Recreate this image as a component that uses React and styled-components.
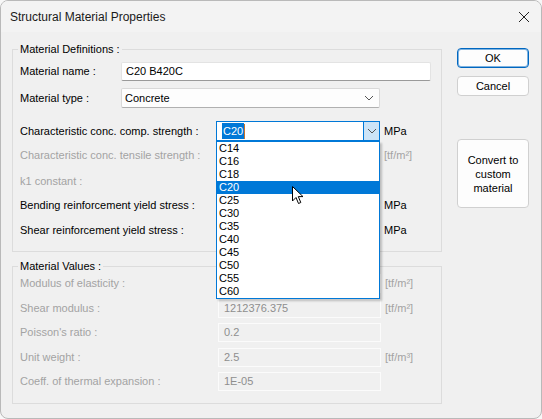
import styled, { createGlobalStyle } from "styled-components";

const GlobalStyle = createGlobalStyle`
  html, body {
    margin: 0;
    padding: 0;
    background: #f7f7f7;
  }
  body {
    font-family: "Liberation Sans", Arial, sans-serif;
    font-size: 11px;
    color: #000;
  }
  * { box-sizing: border-box; }
`;

const grades = ["C14", "C16", "C18", "C20", "C25", "C30", "C35", "C40", "C45", "C50", "C55", "C60"];

function Chevron() {
  return (
    <svg width="10" height="6" viewBox="0 0 10 6">
      <path d="M1 1 L5 5 L9 1" fill="none" stroke="#555" strokeWidth="1" />
    </svg>
  );
}

function Pointer() {
  return (
    <svg width="13" height="20" viewBox="0 0 13 20">
      <path
        d="M1.5 1.5 L1.5 16 L5 12.5 L7.5 18.5 L9.8 17.5 L7.3 11.6 L12 11.6 Z"
        fill="#fff"
        stroke="#000"
        strokeWidth="1"
        strokeLinejoin="round"
      />
    </svg>
  );
}

export default function App() {
  return (
    <>
      <GlobalStyle />
      <Window>
        <TitleBar>
          <Title>Structural Material Properties</Title>
          <svg width="12" height="12" viewBox="0 0 12 12">
            <path d="M1 1 L11 11 M11 1 L1 11" stroke="#222" strokeWidth="1" />
          </svg>
        </TitleBar>
        <Body>
          <LeftColumn>
            <Group $height={210}>
              <Legend>Material Definitions :</Legend>
              <Row $top={5}>
                <Label $width={101}>Material name :</Label>
                <TextBox $width={310}>C20 B420C</TextBox>
              </Row>
              <Row $top={7}>
                <Label $width={101}>Material type :</Label>
                <Select $width={259}>
                  <span>Concrete</span>
                  <Chevron />
                </Select>
              </Row>
              <Row $top={13}>
                <Label $width={197}>Characteristic conc. comp. strength :</Label>
                <Combo>
                  <ComboText>
                    <Selected>C20</Selected>
                    <Caret />
                  </ComboText>
                  <ComboButton>
                    <Chevron />
                  </ComboButton>
                  <ListBox>
                    {grades.map((g) => (
                      <ListItem key={g} $active={g === "C20"}>
                        {g}
                      </ListItem>
                    ))}
                    <Cursor>
                      <Pointer />
                    </Cursor>
                  </ListBox>
                </Combo>
                <Unit>MPa</Unit>
              </Row>
              <Row $top={4}>
                <Label $width={197} $disabled>Characteristic conc. tensile strength :</Label>
                <Spacer />
                <Unit $disabled>[tf/m²]</Unit>
              </Row>
              <Row $top={6}>
                <Label $width={197} $disabled>k1 constant :</Label>
              </Row>
              <Row $top={4}>
                <Label $width={197}>Bending reinforcement yield stress :</Label>
                <Spacer />
                <Unit>MPa</Unit>
              </Row>
              <Row $top={5}>
                <Label $width={197}>Shear reinforcement yield stress :</Label>
                <Spacer />
                <Unit>MPa</Unit>
              </Row>
            </Group>
            <Group $height={145}>
              <Legend>Material Values :</Legend>
              <Row $top={0}>
                <Label $width={198} $disabled>Modulus of elasticity :</Label>
                <ReadOnly />
                <Unit $disabled>[tf/m²]</Unit>
              </Row>
              <Row $top={5}>
                <Label $width={198} $disabled>Shear modulus :</Label>
                <ReadOnly>1212376.375</ReadOnly>
                <Unit $disabled>[tf/m²]</Unit>
              </Row>
              <Row $top={4}>
                <Label $width={198} $disabled>Poisson's ratio :</Label>
                <ReadOnly>0.2</ReadOnly>
              </Row>
              <Row $top={5}>
                <Label $width={198} $disabled>Unit weight :</Label>
                <ReadOnly>2.5</ReadOnly>
                <Unit $disabled>[tf/m³]</Unit>
              </Row>
              <Row $top={4}>
                <Label $width={198} $disabled>Coeff. of thermal expansion :</Label>
                <ReadOnly>1E-05</ReadOnly>
              </Row>
            </Group>
          </LeftColumn>
          <ButtonColumn>
            <Button $top={6} $primary>OK</Button>
            <Button $top={8}>Cancel</Button>
            <Button $top={43} $height={69}>
              Convert to
              <br />
              custom
              <br />
              material
            </Button>
          </ButtonColumn>
        </Body>
      </Window>
    </>
  );
}

const Window = styled.div`
  width: 542px;
  height: 419px;
  border: 1px solid #b9b9b9;
  border-radius: 8px;
  overflow: hidden;
  background: #f0f0f0;
  display: flex;
  flex-direction: column;
`;

const TitleBar = styled.div`
  height: 31px;
  flex: none;
  background: #f3f3f3;
  display: flex;
  align-items: center;
  justify-content: space-between;
  padding: 0 11px 0 9px;
`;

const Title = styled.div`
  font-size: 12px;
  color: #1a1a1a;
`;

const Body = styled.div`
  flex: 1;
  display: flex;
  gap: 15px;
  padding: 10px 0 0 11px;
`;

const LeftColumn = styled.div`
  width: 430px;
  display: flex;
  flex-direction: column;
  gap: 7px;
`;

const Group = styled.fieldset`
  margin: 0;
  height: ${(p) => p.$height}px;
  border: 1px solid #dcdcdc;
  padding: 0 0 0 7px;
  display: flex;
  flex-direction: column;
  min-width: 0;
`;

const Legend = styled.legend`
  padding: 0 2px;
  margin-left: -2px;
  line-height: 14px;
  color: #000;
`;

const Row = styled.div`
  margin-top: ${(p) => p.$top}px;
  height: 20px;
  display: flex;
  align-items: center;
`;

const Label = styled.div`
  width: ${(p) => p.$width}px;
  flex: none;
  white-space: nowrap;
  color: ${(p) => (p.$disabled ? "#a3a3a3" : "#000")};
`;

const TextBox = styled.div`
  width: ${(p) => p.$width}px;
  height: 19px;
  background: #fff;
  border: 1px solid #e3e3e3;
  border-bottom-color: #9a9a9a;
  border-radius: 2px;
  padding-left: 4px;
  display: flex;
  align-items: center;
`;

const Select = styled.div`
  width: ${(p) => p.$width}px;
  height: 20px;
  background: #fdfdfd;
  border: 1px solid #d9d9d9;
  border-bottom-color: #b0b0b0;
  border-radius: 2px;
  padding: 0 5px 0 3px;
  display: flex;
  align-items: center;
  justify-content: space-between;
`;

const Combo = styled.div`
  position: relative;
  width: 164px;
  height: 20px;
  margin-left: -1px;
  border: 1px solid #0078d7;
  background: #fff;
  display: flex;
`;

const ComboText = styled.div`
  flex: 1;
  display: flex;
  align-items: center;
  padding-left: 5px;
`;

const Selected = styled.span`
  background: #0078d7;
  color: #fff;
  line-height: 16px;
  padding: 0 1px;
`;

const Caret = styled.span`
  width: 1px;
  height: 15px;
  background: #c9732b;
`;

const ComboButton = styled.div`
  width: 16px;
  background: #cce4f7;
  border-left: 1px solid #0078d7;
  display: flex;
  align-items: center;
  justify-content: center;
`;

const ListBox = styled.div`
  position: absolute;
  top: 19px;
  left: -1px;
  width: 164px;
  border: 1px solid #0078d7;
  background: #fff;
  box-shadow: 2px 2px 2px rgba(0, 0, 0, 0.22);
  z-index: 2;
`;

const ListItem = styled.div`
  height: 13px;
  line-height: 13px;
  padding-left: 2px;
  background: ${(p) => (p.$active ? "#0078d7" : "transparent")};
  color: ${(p) => (p.$active ? "#fff" : "#000")};
`;

const Cursor = styled.div`
  position: absolute;
  left: 74px;
  top: 43px;
  line-height: 0;
`;

const Spacer = styled.div`
  width: 163px;
  flex: none;
`;

const ReadOnly = styled.div`
  width: 163px;
  height: 19px;
  flex: none;
  border: 1px solid #fbfbfb;
  background: #f0f0f0;
  color: #8e8e8e;
  padding-left: 5px;
  display: flex;
  align-items: center;
`;

const Unit = styled.div`
  margin-left: 4px;
  color: ${(p) => (p.$disabled ? "#a3a3a3" : "#000")};
`;

const ButtonColumn = styled.div`
  width: 72px;
  display: flex;
  flex-direction: column;
`;

const Button = styled.button`
  margin-top: ${(p) => p.$top}px;
  height: ${(p) => p.$height || 20}px;
  width: 72px;
  padding: 0;
  font-family: inherit;
  font-size: 11px;
  line-height: 14px;
  color: #000;
  background: #fdfdfd;
  border: 1px solid ${(p) => (p.$primary ? "#0067c0" : "#d0d0d0")};
  border-radius: 4px;
  box-shadow: ${(p) => (p.$primary ? "inset 0 0 0 1px #7fb3e0" : "none")};
`;
